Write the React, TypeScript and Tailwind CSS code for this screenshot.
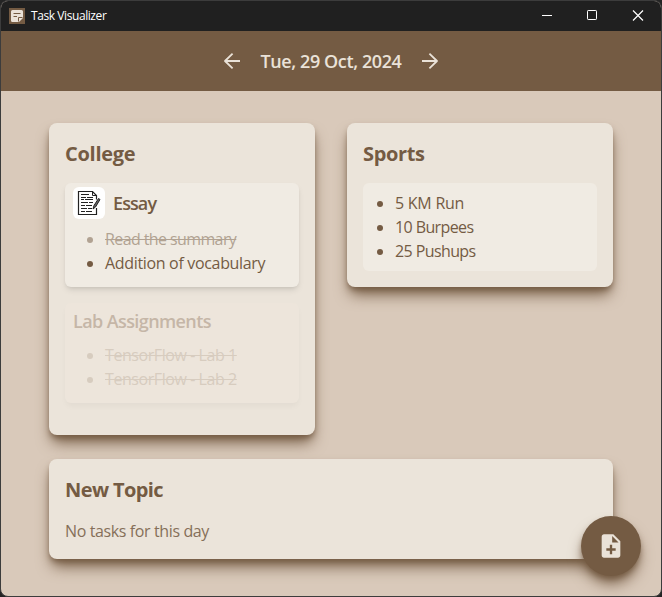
import React from 'react';
import { MdNoteAdd } from 'react-icons/md';

const cardShadow = 'shadow-[0_10px_15px_-3px_#745b43,0_4px_6px_-2px_#745b43]';

function Card({ title, className, children }: { title: React.ReactNode; className: string; children: React.ReactNode }) {
  return (
    <section className={`rounded-lg bg-[#ebe4da] p-4 ${cardShadow} ${className}`}>
      <h2 className="mb-3 h-8 text-[20px] leading-[30px] font-bold">{title}</h2>
      {children}
    </section>
  );
}

function Item({ done, children }: { done?: string; children: React.ReactNode }) {
  return (
    <li className={`flex h-6 items-center whitespace-nowrap ${done ?? ''}`}>
      <span className="mt-px mr-3 size-[6px] shrink-0 rounded-full bg-current" />
      {children}
    </li>
  );
}

function Arrow({ className }: { className?: string }) {
  return (
    <svg className={`size-6 ${className ?? ''}`} viewBox="0 0 24 24" fill="none" stroke="currentColor" strokeWidth="1.800" strokeLinejoin="round">
      <path d="M20 12H5M12.600 4.600L5 12l7.600 7.400" />
    </svg>
  );
}

function AppIcon() {
  return (
    <svg className="size-4 bg-[#745b43]" viewBox="0 0 16 16">
      <path d="M3.500 2h9A1.500 1.500 0 0 1 14 3.500V10l-4 4H3.500A1.500 1.500 0 0 1 2 12.500v-9A1.500 1.500 0 0 1 3.500 2z" fill="#eae2d8" />
      <path d="M4.500 5.500h7M4.500 8.500h3.500M9.500 13.500v-4h4" fill="none" stroke="#745b43" strokeWidth="1" />
    </svg>
  );
}

function EssayIcon() {
  return (
    <svg className="size-8 shrink-0 rounded-md bg-white" viewBox="0 0 32 32" fill="none" stroke="#222">
      <path d="M23.500 21v6.500h-18v-23h14l4 4v4" strokeWidth="1.200" />
      <path d="M19.500 4.500v4h4" />
      <path d="M8 7.500h8M8 10.500h5M14 10.500h6M8 12.500h3M12 12.500h8M8 15.500h7M16 15.500h4M8 18.500h4M13 18.500h6M8 21.500h6M15 21.500h4M8 24.500h4M13 24.500h6" />
      <path d="M25.500 11.500l-4.500 7-1 3.500 2.500-2 4.500-7.500z" fill="#666" strokeWidth="1" />
    </svg>
  );
}

export default function App() {
  return (
    <div className="h-[597px] w-[662px] overflow-hidden bg-[#242424] font-['Open_Sans','Noto_Sans',sans-serif] font-normal text-[#745b43]">
      <div className="relative flex h-full flex-col overflow-hidden rounded-lg border border-[#3c3c3c] bg-[#d9c9ba]">
        <div className="flex h-[30px] shrink-0 items-center bg-[#202020] pl-2 text-white">
          <AppIcon />
          <span className="ml-[6px] text-[12px] tracking-[-0.420px]">Task Visualizer</span>
          <svg className="ml-auto h-[30px] w-[120px]" viewBox="0 0 120 30" fill="none" stroke="white">
            <path d="M1 14.500h10" />
            <rect x="46.500" y="9.500" width="9" height="9" rx="0.700" />
            <path d="M92 9.500l10 10M102 9.500l-10 10" strokeWidth="1.200" />
          </svg>
        </div>
        <header className="flex h-[60px] shrink-0 items-center justify-center bg-[#745b43] text-[#eae2d8]">
          <Arrow />
          <h1 className="w-[174px] text-center text-[18px] font-semibold whitespace-nowrap"><span className="tracking-[-0.400px]">Tue, 29 Oct, 2024</span></h1>
          <Arrow className="rotate-180" />
        </header>
        <main className="grid grid-cols-[266px_266px] items-start gap-x-8 gap-y-6 px-12 pt-8">
          <Card title={<span className="tracking-[-0.280px]">College</span>} className="h-[312px]">
            <div className="h-[104px] rounded-md bg-[#f0ebe3] px-2 pt-1 shadow-md">
              <div className="flex items-center gap-2">
                <EssayIcon />
                <h3 className="text-[18px] leading-7 font-semibold"><span className="tracking-[-0.900px]">Essay</span></h3>
              </div>
              <ul className="mt-2 pl-[14px]">
                <Item done="line-through opacity-50"><span className="tracking-[-0.600px]">Read the summary</span></Item>
                <Item><span className="tracking-[-0.330px]">Addition of vocabulary</span></Item>
              </ul>
            </div>
            <div className="mt-4 h-[100px] rounded-md bg-[#ede5db] px-2 pt-1 shadow-[0_4px_6px_-1px_rgba(0,0,0,0.04)]">
              <h3 className="text-[18px] leading-7 font-semibold text-[#c5b6a7]"><span className="tracking-[-0.600px]">Lab Assignments</span></h3>
              <ul className="mt-2 pl-[14px]">
                <Item done="line-through text-[#d7ccbf]"><span className="tracking-[-0.430px]">TensorFlow - Lab 1</span></Item>
                <Item done="line-through text-[#d7ccbf]"><span className="tracking-[-0.430px]">TensorFlow - Lab 2</span></Item>
              </ul>
            </div>
          </Card>
          <Card title={<span className="tracking-[-0.350px]">Sports</span>} className="h-[164px]">
            <ul className="h-[88px] rounded-md bg-[#f0ebe3] py-2 pl-[14px]">
              <Item><span className="tracking-[-0.250px]">5 KM Run</span></Item>
              <Item><span className="tracking-[-0.600px]">10 Burpees</span></Item>
              <Item><span className="tracking-[-0.600px]">25 Pushups</span></Item>
            </ul>
          </Card>
          <Card title={<span className="tracking-[-0.600px]">New Topic</span>} className="col-span-2 h-[100px]">
            <p className="opacity-85"><span className="tracking-[-0.380px]">No tasks for this day</span></p>
          </Card>
        </main>
        <button className={`absolute right-5 bottom-5 flex size-[60px] items-center justify-center rounded-full bg-[#745b43] text-[#eae2d8] ${cardShadow}`}>
          <MdNoteAdd className="size-7" />
        </button>
      </div>
    </div>
  );
}
